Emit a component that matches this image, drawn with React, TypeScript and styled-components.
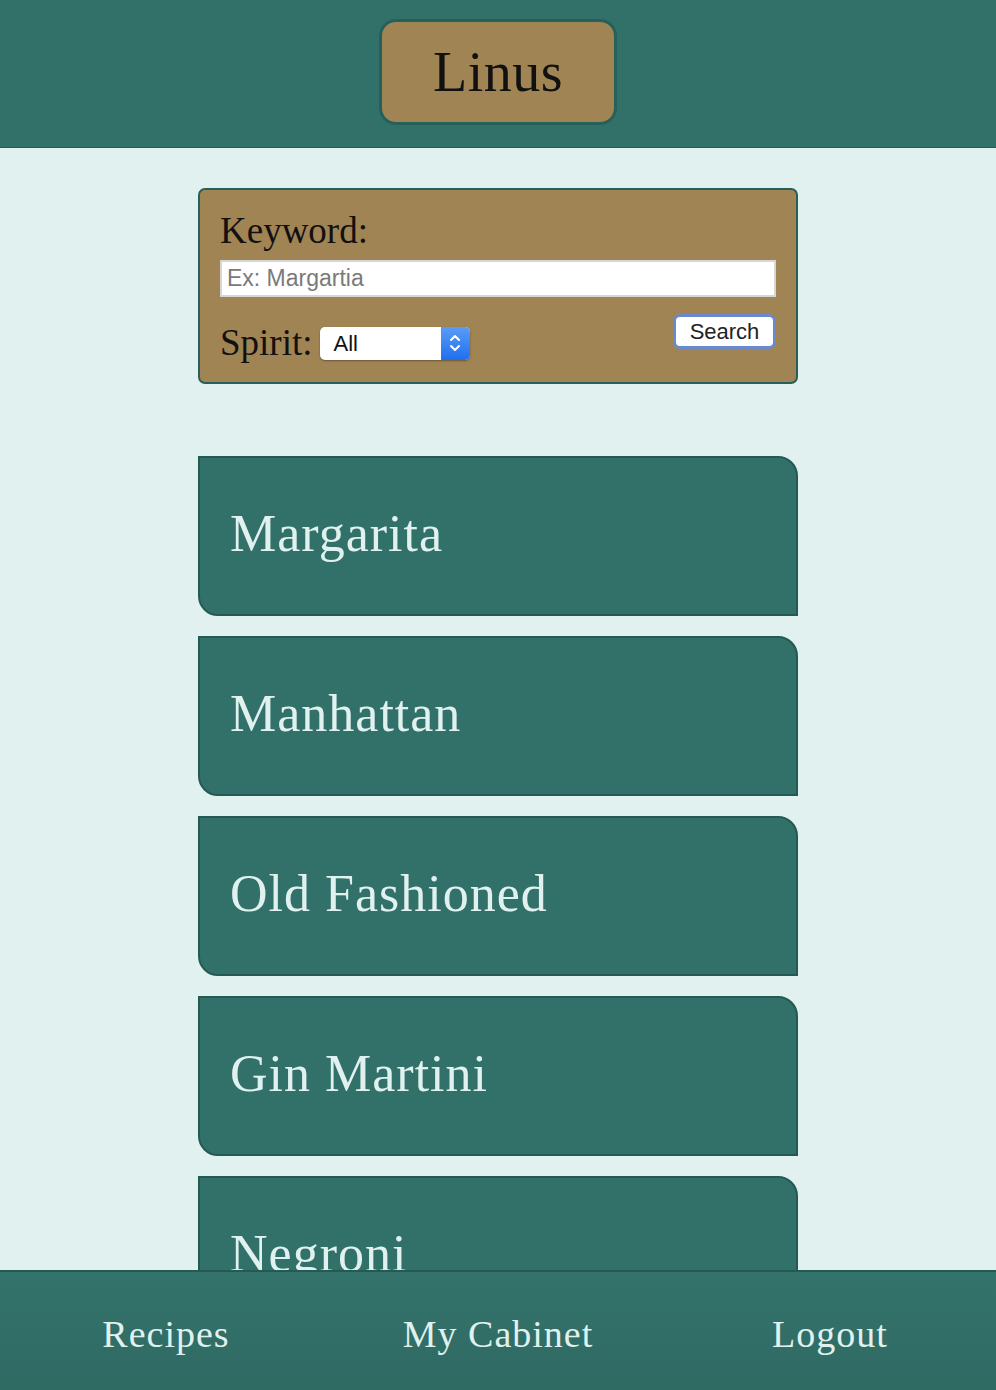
import React from "react";
import styled, { createGlobalStyle } from "styled-components";

const Global = createGlobalStyle`
  html, body { margin: 0; padding: 0; }
  body {
    background: #e0f1ef;
    font-family: "Liberation Serif", "Times New Roman", serif;
  }
`;

const Page = styled.div`
  min-height: 1390px;
  display: flex;
  flex-direction: column;
  align-items: stretch;
`;

const Header = styled.header`
  height: 148px;
  box-sizing: border-box;
  background: #32716a;
  border-bottom: 1px solid #25594f;
  display: flex;
  justify-content: center;
  align-items: flex-start;
  padding-top: 19px;
`;

const TitleBox = styled.div`
  width: 238px;
  height: 106px;
  box-sizing: border-box;
  background: #a08453;
  border: 3px solid #27605a;
  border-radius: 17px;
  display: flex;
  align-items: center;
  justify-content: center;
  font-size: 56px;
  color: #111;
  letter-spacing: 0.5px;
`;

const Main = styled.main`
  display: flex;
  flex-direction: column;
  align-items: center;
  padding: 40px 0 200px;
`;

const SearchPanel = styled.form`
  width: 600px;
  height: 196px;
  box-sizing: border-box;
  background: #a08453;
  border: 2px solid #27605a;
  border-radius: 7px;
  padding: 21px 20px 0 20px;
  display: flex;
  flex-direction: column;
`;

const Label = styled.label`
  font-size: 37px;
  line-height: 40px;
  color: #111;
`;

const KeywordInput = styled.input`
  margin-top: 9px;
  height: 37px;
  width: 100%;
  box-sizing: border-box;
  border: 2px solid #d6d6d6;
  background: #fff;
  padding: 0 5px;
  font-family: "Liberation Sans", Helvetica, Arial, sans-serif;
  font-size: 23px;
  color: #333;
  outline: none;
  &::placeholder { color: #7a7a7a; }
`;

const Row = styled.div`
  margin-top: 21px;
  display: flex;
  align-items: flex-start;
  justify-content: space-between;
`;

const SpiritGroup = styled.div`
  display: flex;
  align-items: center;
  gap: 7px;
  margin-top: 5px;
`;

const SelectBox = styled.div`
  width: 150px;
  height: 33px;
  box-sizing: border-box;
  background: #fff;
  border-radius: 5px;
  box-shadow: 0 1px 2px rgba(0, 0, 0, 0.35);
  display: flex;
  align-items: center;
  justify-content: space-between;
  overflow: hidden;
  font-family: "Liberation Sans", Helvetica, Arial, sans-serif;
  font-size: 22px;
  color: #111;
`;

const SelectText = styled.span`
  padding-left: 14px;
  padding-top: 2px;
`;

const Chevrons = styled.span`
  width: 29px;
  height: 100%;
  background: linear-gradient(#5a9cf8, #1f6ff0);
  display: flex;
  align-items: center;
  justify-content: center;
`;

const SearchButton = styled.button`
  width: 103px;
  height: 35px;
  box-sizing: border-box;
  background: #fff;
  border: 3px solid #6a8ad0;
  border-radius: 7px;
  font-family: "Liberation Sans", Helvetica, Arial, sans-serif;
  font-size: 22px;
  color: #222;
  padding: 0;
  margin-top: -4px;
`;

const List = styled.div`
  margin-top: 72px;
  display: flex;
  flex-direction: column;
  gap: 20px;
`;

const Card = styled.div`
  width: 600px;
  height: 160px;
  box-sizing: border-box;
  background: #32716a;
  border: 2px solid #245a52;
  border-radius: 0 20px 0 20px;
  display: flex;
  align-items: center;
  padding: 0 0 6px 30px;
  font-size: 52px;
  color: #e0f1ef;
  letter-spacing: 1px;
`;

const Footer = styled.nav`
  position: fixed;
  left: 0;
  right: 0;
  bottom: 0;
  height: 120px;
  box-sizing: border-box;
  border-top: 2px solid #255a52;
  background: linear-gradient(#33736b, #2f6a63);
  display: grid;
  grid-template-columns: repeat(3, 1fr);
  align-items: center;
  justify-items: center;
`;

const NavLink = styled.a`
  font-size: 38px;
  color: #e0f1ef;
  text-decoration: none;
  letter-spacing: 1px;
  margin-top: 6px;
`;

const drinks = ["Margarita", "Manhattan", "Old Fashioned", "Gin Martini", "Negroni"];

export default function App() {
  return (
    <>
      <Global />
      <Page>
        <Header>
          <TitleBox>Linus</TitleBox>
        </Header>
        <Main>
          <SearchPanel onSubmit={(e) => e.preventDefault()}>
            <Label>Keyword:</Label>
            <KeywordInput placeholder="Ex: Margartia" />
            <Row>
              <SpiritGroup>
                <Label>Spirit:</Label>
                <SelectBox>
                  <SelectText>All</SelectText>
                  <Chevrons>
                    <svg width="14" height="22" viewBox="0 0 14 22" fill="none" stroke="#fff" strokeWidth="2" strokeLinecap="round" strokeLinejoin="round">
                      <path d="M3 8 L7 4 L11 8" />
                      <path d="M3 14 L7 18 L11 14" />
                    </svg>
                  </Chevrons>
                </SelectBox>
              </SpiritGroup>
              <SearchButton type="submit">Search</SearchButton>
            </Row>
          </SearchPanel>
          <List>
            {drinks.map((d) => (
              <Card key={d}>{d}</Card>
            ))}
          </List>
        </Main>
        <Footer>
          <NavLink href="#">Recipes</NavLink>
          <NavLink href="#">My Cabinet</NavLink>
          <NavLink href="#">Logout</NavLink>
        </Footer>
      </Page>
    </>
  );
}
